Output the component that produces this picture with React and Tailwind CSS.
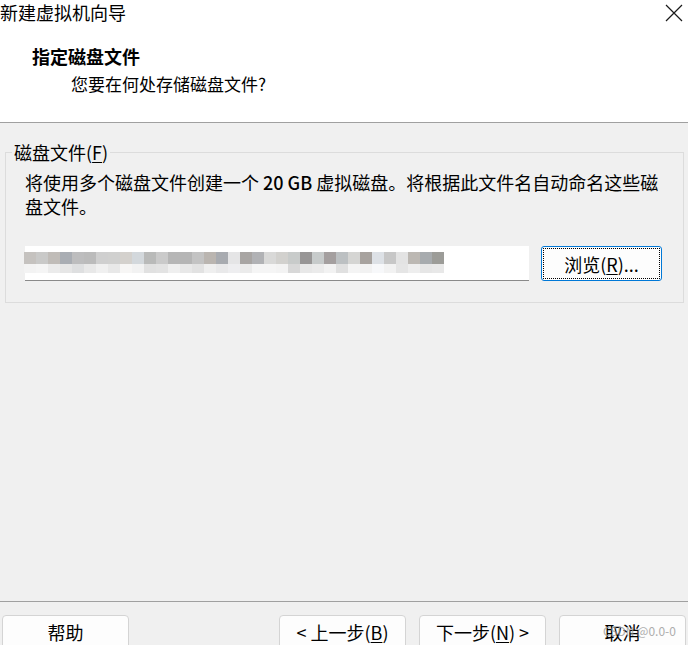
import React from 'react';

const font = { fontFamily: '"Noto Sans CJK SC", "Liberation Sans", sans-serif' };

const mosaicTop = [
  '#c5c2bf', '#c9c9c8', '#c0bcb8', '#a9adb3', '#bdbdbe', '#bbbbbb', '#cfcfcf', '#d0d0cf', '#d4d1cd',
  '#d3d8dc', '#b9bab9', '#cacaca', '#b6b6b6', '#b5b5b5', '#c3c3c3', '#bab5b0', '#a8abb0', '#e5e5e6',
  '#a8a5a3', '#b1b2b5', '#d9d9d8', '#d2d1ce', '#c8cbca', '#989696', '#c7cbcb', '#a49f9f', '#bcc0c2',
  '#d5d5d3', '#a7a29e', '#dde1e6', '#c7c7c7', '#e3e3e3', '#bcb8b3', '#a7abae', '#9c9c98',
];
const mosaicBottom = [
  '#f3f3f3', '#f5f5f5', '#ebebeb', '#e6e6e6', '#dedfe0', '#e8e8e8', '#f0f0f0', '#e8e8e8', '#f7f6f5',
  '#f2f2f2', '#e1e1e1', '#e3e3e3', '#efefef', '#e8e8e8', '#e2e2e2', '#efefef', '#e9e9ea', '#eeeef0',
  '#ebebeb', '#f5f5f5', '#f5f5f5', '#f3f3f3', '#d8d8d8', '#e8e8e8', '#ebebeb', '#f2f2f2', '#e0e0e0',
  '#f4f4f4', '#f2f2f2', '#f7f8fa', '#f2f2f2', '#e5e5e5', '#eeeeee', '#e6e6e6', '#e8e8e8',
];

const FooterButton = ({ children, className }) => (
  <button
    className={
      'h-[34px] w-[127px] shrink-0 rounded-[4px] border border-[#d4d4d4] bg-[#fdfdfd] text-[18px] leading-[24px] text-black ' +
      (className || '')
    }
  >
    {children}
  </button>
);

export default function App() {
  return (
    <div style={font} className="relative flex h-[645px] w-[688px] flex-col overflow-hidden bg-[#f0f0f0] text-black">
      {/* Header */}
      <div className="h-[123px] shrink-0 border-b border-[#a0a0a0] bg-white">
        <div className="flex h-[24px] items-center justify-between pr-[5px]">
          <span className="text-[18px] leading-[24px]">新建虚拟机向导</span>
          <svg width="18" height="18" viewBox="0 0 18 18" className="mt-[1px]">
            <path d="M1 1 L17 17 M17 1 L1 17" stroke="#1a1a1a" strokeWidth="1.2" fill="none" />
          </svg>
        </div>
        <div className="pl-[32px] pt-[20px] text-[18px] font-bold leading-[24px]">指定磁盘文件</div>
        <div className="pl-[71px] pt-[4px] text-[17px] leading-[24px]">您要在何处存储磁盘文件?</div>
      </div>

      {/* Body */}
      <div className="flex-1 px-[5px] pt-[19px]">
        <fieldset className="m-0 border border-[#dcdcdc] pb-[21px] pl-[19px] pr-[21px] pt-[8px]">
          <legend className="ml-[-13px] px-[2px] text-[18px] leading-[20px]">
            磁盘文件(<span className="underline underline-offset-2">F</span>)
          </legend>
          <p className="text-[18px] leading-[24px]">
            将使用多个磁盘文件创建一个 <span className="font-medium">20 GB</span> 虚拟磁盘。将根据此文件名自动命名这些磁盘文件。
          </p>
          <div className="mt-[28px] flex items-start gap-[12px]">
            <div className="relative h-[35px] w-[504px] border-b border-[#8a8a8a] bg-white">
              <div className="absolute left-[-1px] top-[6px] flex flex-col">
                <div className="flex">
                  {mosaicTop.map((c, i) => (
                    <div key={i} className="h-[12px] w-[12px]" style={{ backgroundColor: c }} />
                  ))}
                </div>
                <div className="flex">
                  {mosaicBottom.map((c, i) => (
                    <div key={i} className="h-[9px] w-[12px]" style={{ backgroundColor: c }} />
                  ))}
                </div>
              </div>
            </div>
            <button className="flex h-[35px] w-[121px] items-center justify-center rounded-[3px] border border-[#0078d7] bg-[#fdfdfd] p-[1px]">
              <span className="flex h-full w-full items-center justify-center border border-dotted border-black text-[18px] leading-[24px]">
                浏览(<span className="underline underline-offset-2">R</span>)...
              </span>
            </button>
          </div>
        </fieldset>
      </div>

      {/* Footer */}
      <div className="h-[44px] shrink-0 border-t border-[#a0a0a0] pt-[13px]">
        <div className="flex items-start pl-[2px]">
          <FooterButton className="w-[126px]">帮助</FooterButton>
          <div className="flex-1" />
          <div className="flex gap-[13px] pr-[2px]">
            <FooterButton>&lt; 上一步(<span className="underline underline-offset-2">B</span>)</FooterButton>
            <FooterButton>下一步(<span className="underline underline-offset-2">N</span>) &gt;</FooterButton>
            <FooterButton>取消</FooterButton>
          </div>
        </div>
      </div>

      {/* watermark */}
      <span className="pointer-events-none absolute left-[603px] top-[624px] text-[12px] leading-[14px] text-[#9a9a9a] opacity-80">
        CSDN @0.0-0
      </span>
    </div>
  );
}
